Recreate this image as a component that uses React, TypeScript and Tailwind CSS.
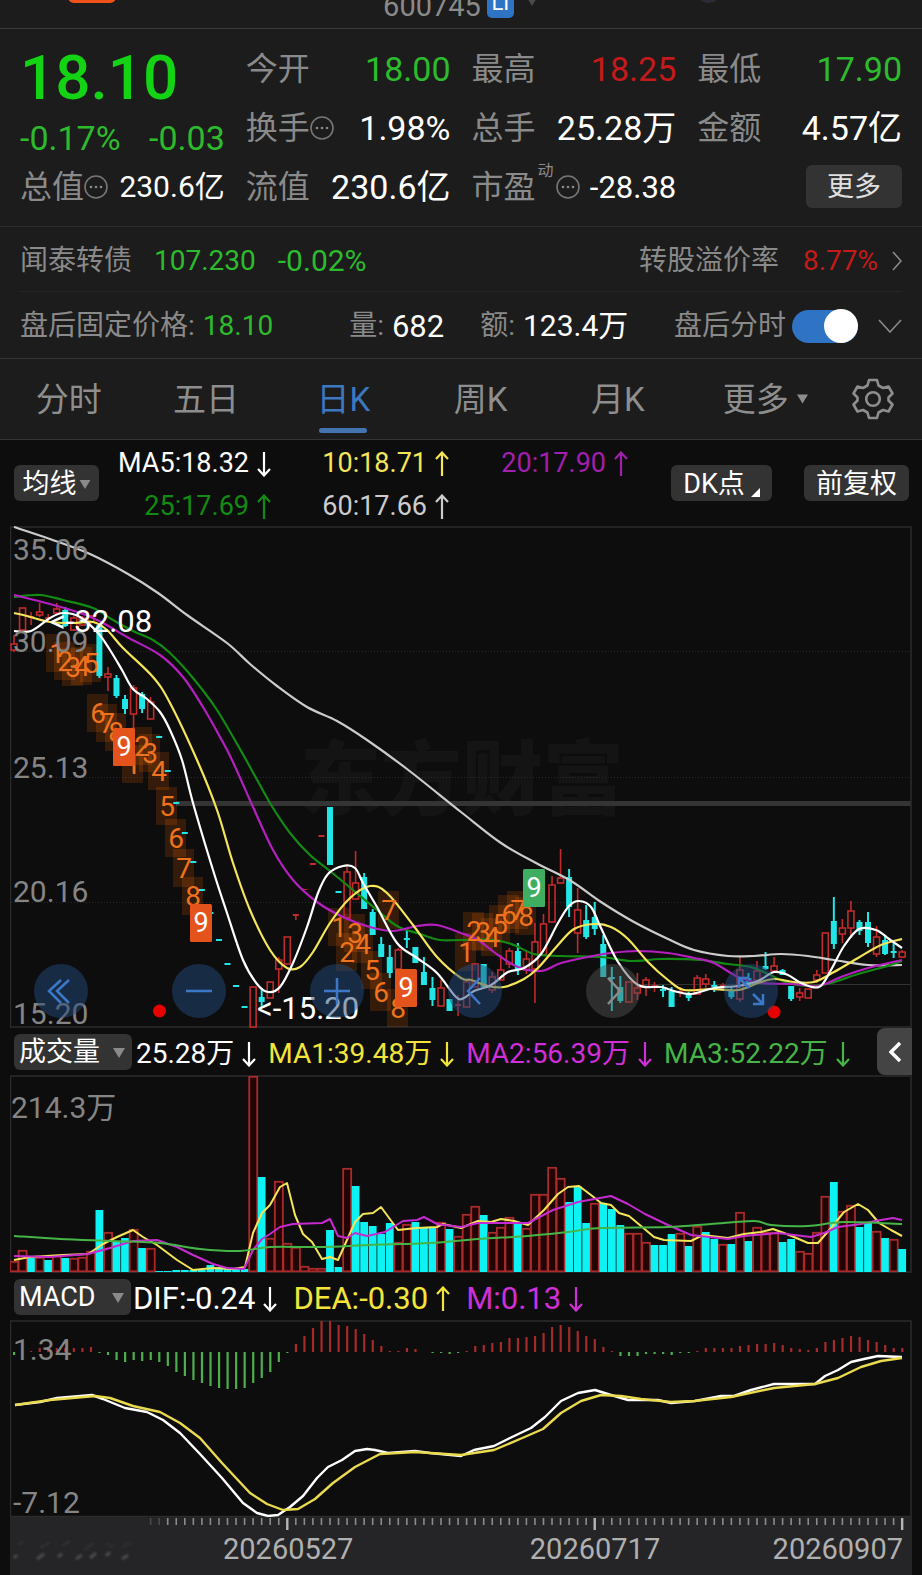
import type { ReactNode } from "react";

type Point = [number, number];
type Candle = [kind: "r" | "c", high: number, top: number, bottom: number, low: number];

const STEP = 8.54;
const xAt = (i: number) => 14 + STEP * i;

const RED = "#c22b2b";
const CYAN = "#22e6e6";
const YELLOW = "#f5e558";
const MAGENTA = "#b51fc0";

/* Catmull-Rom spline through the given points */
function curve(points: Point[]): string {
  let d = `M${points[0][0]} ${points[0][1]}`;
  for (let i = 0; i < points.length - 1; i++) {
    const p0 = points[i - 1] ?? points[i];
    const p1 = points[i];
    const p2 = points[i + 1];
    const p3 = points[i + 2] ?? p2;
    d += `C${p1[0] + (p2[0] - p0[0]) / 6} ${p1[1] + (p2[1] - p0[1]) / 6} ${p2[0] - (p3[0] - p1[0]) / 6} ${p2[1] - (p3[1] - p1[1]) / 6} ${p2[0]} ${p2[1]}`;
  }
  return d;
}

const candles: Candle[] = [
  ["r", 635, 644, 650, 652], ["r", 608, 608, 630, 630], ["r", 612, 616, 618, 625], ["r", 603, 612, 615, 617],
  ["r", 614, 617, 619, 622], ["r", 603, 609, 613, 615], ["c", 607, 610, 626, 627], ["r", 616, 618, 630, 631],
  ["r", 616, 618, 625, 626], ["r", 615, 616, 622, 624], ["c", 625, 625, 676, 678], ["r", 667, 674, 677, 691],
  ["c", 675, 678, 696, 698], ["c", 695, 699, 709, 714], ["r", 685, 688, 714, 772], ["c", 692, 694, 709, 713],
  ["r", 697, 702, 719, 719], ["c", 736, 736, 738, 738], ["c", 770, 770, 772, 772], ["c", 802, 802, 804, 804],
  ["c", 832, 832, 834, 834], ["c", 861, 861, 863, 863], ["c", 889, 889, 891, 891], ["c", 912, 912, 914, 914],
  ["c", 939, 939, 941, 941], ["c", 963, 963, 965, 965], ["c", 985, 985, 987, 987], ["c", 1006, 1006, 1008, 1008],
  ["r", 987, 987, 1027, 1027], ["c", 988, 997, 1002, 1007], ["r", 982, 982, 998, 998], ["r", 957, 960, 969, 993],
  ["r", 937, 937, 964, 964], ["r", 914, 914, 916, 920], ["r", 889, 889, 890, 890], ["r", 863, 863, 865, 865],
  ["r", 835, 835, 837, 837], ["c", 807, 807, 865, 865], ["c", 891, 891, 893, 893], ["r", 867, 872, 918, 918],
  ["r", 851, 883, 899, 899], ["c", 873, 877, 909, 909], ["c", 909, 912, 935, 935], ["c", 937, 944, 957, 957],
  ["c", 945, 957, 973, 978], ["r", 948, 950, 969, 969], ["c", 930, 938, 940, 948], ["c", 947, 947, 963, 963],
  ["c", 957, 972, 985, 985], ["c", 977, 988, 1000, 1006], ["r", 980, 988, 1006, 1006], ["c", 999, 999, 1011, 1011],
  ["r", 995, 1004, 1006, 1016], ["r", 982, 982, 1007, 1007], ["r", 964, 964, 987, 987], ["c", 964, 964, 987, 987],
  ["r", 972, 977, 990, 993], ["r", 955, 970, 980, 980], ["r", 948, 951, 964, 968], ["c", 943, 951, 970, 975],
  ["r", 950, 959, 970, 974], ["r", 923, 942, 969, 1003], ["r", 914, 924, 955, 955], ["r", 876, 885, 922, 922],
  ["r", 849, 878, 883, 884], ["c", 869, 877, 907, 917], ["r", 888, 910, 933, 953], ["c", 905, 920, 937, 939],
  ["c", 902, 917, 929, 935], ["c", 935, 944, 977, 977], ["c", 967, 977, 979, 1011], ["c", 976, 987, 1001, 1003],
  ["r", 982, 982, 1002, 1002], ["r", 973, 988, 993, 1000], ["r", 977, 980, 987, 996], ["r", 982, 985, 987, 992],
  ["c", 985, 989, 991, 997], ["c", 987, 991, 1007, 1007], ["r", 987, 991, 993, 997], ["c", 992, 994, 998, 1001],
  ["r", 975, 978, 994, 994], ["r", 974, 979, 984, 988], ["c", 981, 985, 987, 992], ["r", 983, 985, 987, 988],
  ["c", 987, 990, 997, 999], ["r", 957, 970, 999, 1002], ["c", 973, 978, 985, 988], ["r", 961, 971, 980, 983],
  ["c", 952, 966, 969, 970], ["r", 957, 966, 971, 973], ["c", 969, 970, 975, 975], ["c", 986, 986, 999, 1001],
  ["r", 988, 993, 997, 1001], ["r", 989, 989, 998, 998], ["r", 970, 975, 980, 983], ["r", 933, 933, 973, 973],
  ["c", 897, 921, 944, 949], ["r", 919, 928, 934, 943], ["r", 901, 911, 928, 936], ["c", 920, 922, 931, 935],
  ["c", 912, 922, 943, 947], ["r", 926, 937, 954, 957], ["c", 935, 940, 954, 955], ["c", 943, 951, 953, 958],
  ["r", 950, 952, 957, 958],
];

const ma60: Point[] = [[14, 527], [50, 539], [90, 554], [128, 574], [158, 593], [187, 615], [227, 643], [250, 664], [277, 686], [307, 707], [337, 721], [367, 740], [407, 769], [461, 812], [501, 843], [536, 863], [571, 881], [601, 902], [634, 922], [668, 939], [694, 950], [728, 956], [754, 956], [781, 954], [808, 956], [834, 960], [868, 965], [902, 965]];
const ma5: Point[] = [[14, 631], [31, 631], [50, 618], [63, 613], [80, 617], [98, 633], [110, 650], [122, 670], [133, 689], [147, 699], [160, 712], [170, 730], [182, 760], [193, 803], [213, 870], [227, 913], [243, 960], [257, 984], [268, 992], [280, 987], [293, 963], [307, 927], [318, 893], [328, 874], [343, 866], [355, 868], [363, 883], [377, 907], [397, 943], [417, 958], [437, 973], [456, 997], [464, 998], [474, 991], [491, 985], [508, 972], [524, 968], [541, 954], [558, 923], [569, 906], [579, 901], [591, 907], [601, 928], [618, 962], [638, 985], [661, 987], [674, 991], [691, 994], [714, 988], [738, 986], [758, 981], [774, 972], [788, 975], [801, 983], [819, 987], [831, 970], [844, 946], [859, 929], [876, 930], [889, 939], [902, 948]];
const ma10: Point[] = [[14, 613], [27, 616], [50, 622], [73, 623], [93, 622], [107, 630], [123, 648], [153, 677], [170, 703], [197, 760], [217, 810], [233, 863], [250, 910], [270, 950], [287, 968], [300, 967], [313, 952], [330, 923], [350, 898], [370, 886], [387, 893], [413, 925], [437, 957], [461, 978], [471, 980], [488, 986], [504, 987], [524, 979], [538, 968], [558, 945], [574, 929], [594, 924], [611, 927], [628, 939], [648, 962], [668, 980], [684, 990], [711, 989], [738, 990], [758, 983], [774, 979], [794, 982], [814, 982], [834, 972], [858, 958], [881, 945], [902, 939]];
const ma20: Point[] = [[14, 595], [50, 604], [83, 614], [103, 623], [127, 637], [160, 655], [183, 677], [203, 707], [220, 737], [232, 760], [253, 807], [273, 850], [293, 880], [317, 902], [343, 917], [370, 927], [393, 931], [417, 926], [437, 925], [461, 933], [478, 940], [498, 955], [518, 967], [541, 971], [561, 963], [588, 957], [611, 953], [638, 951], [668, 953], [694, 958], [714, 963], [738, 977], [761, 983], [794, 984], [818, 986], [841, 977], [868, 968], [902, 960]];
const ma25: Point[] = [[14, 597], [40, 595], [63, 600], [93, 608], [113, 620], [133, 631], [153, 640], [170, 653], [193, 678], [217, 710], [245, 758], [270, 803], [290, 833], [310, 855], [330, 871], [353, 890], [377, 910], [397, 926], [420, 934], [440, 940], [461, 940], [494, 940], [514, 945], [534, 954], [561, 956], [601, 957], [631, 961], [661, 959], [701, 960], [728, 964], [751, 967], [768, 974], [788, 983], [811, 986], [831, 983], [858, 974], [884, 967], [902, 961]];

/* Sequential-count markers: digit and centre */
const counts: [string, number, number][] = [
  ["1", 57, 653], ["2", 65, 661], ["3", 73, 667], ["4", 82, 666], ["5", 91, 663], ["6", 98, 713], ["7", 107, 723], ["8", 116, 732],
  ["1", 133, 764], ["2", 142, 746], ["3", 150, 753], ["4", 159, 771], ["5", 167, 806], ["6", 176, 838], ["7", 184, 868], ["8", 193, 896],
  ["1", 339, 927], ["2", 347, 952], ["3", 355, 933], ["4", 363, 944], ["5", 372, 970], ["6", 381, 992], ["7", 389, 910], ["8", 398, 1008],
  ["1", 466, 952], ["2", 474, 931], ["3", 483, 932], ["4", 492, 937], ["5", 500, 924], ["6", 509, 914], ["7", 518, 910], ["8", 526, 916],
];
const nines: [number, number, string][] = [[124, 747, "#e5531d"], [201, 923, "#e5531d"], [406, 988, "#e5531d"], [534, 888, "#3fae60"]];

const volumeKinds = "rrcrcrcrrrcrccrcrccccccccccc" + "rcrrrrrrrccrcccccrrcccrcrrrcrrrcrrrrrcccrcccrrrcccrcrccrcrcrrrccrrrrcrrccrcrc";
const volumeTops = [
  1261, 1250, 1258, 1257, 1260, 1255, 1258, 1258, 1257, 1251, 1210, 1232, 1242, 1238, 1229, 1248, 1248, 1271, 1271, 1270, 1270, 1270, 1270, 1265, 1267, 1268, 1269, 1269,
  1076, 1177, 1238, 1181, 1243, 1247, 1266, 1268, 1268, 1230, 1267, 1168, 1186, 1222, 1226, 1234, 1223, 1242, 1224, 1222, 1228, 1228, 1222, 1229, 1236,
  1214, 1206, 1215, 1232, 1227, 1217, 1224, 1228, 1194, 1194, 1167, 1178, 1202, 1186, 1223, 1203, 1203, 1209, 1225, 1233, 1233, 1242, 1245, 1245, 1234, 1233, 1246, 1226, 1232, 1239, 1244, 1244, 1212, 1241, 1227, 1232, 1232, 1242, 1239, 1251, 1253, 1232, 1196, 1182, 1211, 1205, 1227, 1223, 1231, 1238, 1239, 1249,
];
const volYellow: Point[] = [[14, 1260], [30, 1257], [63, 1255], [88, 1254], [103, 1244], [117, 1237], [133, 1230], [143, 1237], [157, 1245], [177, 1260], [193, 1270], [213, 1268], [233, 1269], [245, 1267], [253, 1233], [262, 1213], [270, 1205], [280, 1187], [287, 1183], [295, 1215], [303, 1234], [312, 1242], [322, 1259], [330, 1257], [338, 1260], [347, 1240], [355, 1222], [363, 1214], [373, 1213], [381, 1207], [398, 1230], [417, 1228], [437, 1227], [443, 1224], [461, 1228], [478, 1221], [491, 1222], [501, 1219], [514, 1221], [528, 1225], [544, 1210], [558, 1194], [568, 1187], [579, 1186], [591, 1195], [601, 1203], [611, 1205], [619, 1213], [629, 1216], [641, 1226], [654, 1237], [664, 1240], [691, 1241], [703, 1235], [728, 1238], [744, 1234], [761, 1232], [773, 1229], [784, 1233], [794, 1237], [808, 1243], [818, 1243], [831, 1228], [844, 1212], [858, 1204], [868, 1210], [879, 1223], [891, 1230], [902, 1236]];
const volMagenta: Point[] = [[14, 1256], [50, 1257], [88, 1254], [110, 1248], [133, 1241], [157, 1240], [177, 1247], [193, 1255], [213, 1264], [227, 1268], [244, 1269], [253, 1250], [262, 1239], [270, 1234], [280, 1227], [293, 1224], [322, 1223], [330, 1219], [338, 1236], [347, 1238], [355, 1233], [367, 1236], [385, 1232], [403, 1221], [417, 1220], [424, 1217], [437, 1224], [461, 1227], [478, 1223], [514, 1223], [528, 1223], [553, 1210], [578, 1202], [611, 1196], [628, 1204], [645, 1214], [668, 1225], [691, 1235], [728, 1239], [744, 1236], [778, 1233], [794, 1235], [811, 1237], [824, 1233], [838, 1227], [861, 1224], [875, 1221], [893, 1218], [902, 1220]];
const volGreen: Point[] = [[14, 1236], [60, 1239], [110, 1241], [160, 1243], [200, 1249], [240, 1251], [270, 1247], [320, 1247], [370, 1245], [430, 1243], [478, 1239], [528, 1236], [568, 1232], [601, 1228], [668, 1227], [711, 1224], [754, 1221], [771, 1225], [808, 1226], [844, 1222], [902, 1224]];

/* MACD histogram, positive above the zero line */
const histogram = [
  -3, 0, 1, 4, 5, 4, 4, 4, 4, 5, -1, -3, -8, -10, -8, -9, -8, -10, -14, -20, -24, -28, -31, -34, -36, -37, -37, -36, -31, -26, -20, -10, -1,
  8, 16, 24, 31, 31, 27, 26, 23, 18, 12, 6, 1, 1, 4, 3, 0, -1, -1, -2, -1, 1, 6, 7, 9, 10, 14, 14, 15, 16, 19, 25, 27, 25, 21, 16, 13, 5, 1,
  -4, -4, -4, -2, -2, -2, -3, -1, -1, 1, 4, 4, 4, 4, 6, 7, 8, 8, 9, 7, 4, 3, 2, 4, 10, 12, 14, 16, 15, 12, 10, 7, 4, 4,
];
const dif: Point[] = [[15, 1405], [40, 1402], [57, 1398], [92, 1395], [103, 1399], [125, 1408], [147, 1412], [163, 1420], [180, 1433], [200, 1454], [222, 1478], [243, 1503], [257, 1513], [268, 1516], [278, 1515], [290, 1507], [303, 1496], [317, 1478], [328, 1467], [342, 1460], [355, 1451], [367, 1449], [375, 1450], [388, 1453], [415, 1451], [430, 1453], [461, 1456], [474, 1450], [494, 1446], [510, 1438], [531, 1428], [545, 1417], [561, 1401], [578, 1393], [595, 1390], [611, 1395], [628, 1400], [658, 1400], [671, 1403], [695, 1401], [721, 1396], [734, 1396], [751, 1390], [774, 1384], [815, 1384], [825, 1376], [838, 1370], [851, 1362], [864, 1359], [878, 1356], [902, 1357]];
const dea: Point[] = [[15, 1405], [50, 1400], [95, 1396], [110, 1398], [133, 1406], [160, 1412], [180, 1423], [200, 1438], [222, 1463], [250, 1493], [267, 1504], [283, 1510], [298, 1509], [315, 1499], [333, 1483], [355, 1467], [380, 1454], [415, 1452], [461, 1455], [494, 1450], [520, 1439], [543, 1429], [561, 1413], [581, 1401], [601, 1395], [621, 1396], [641, 1399], [671, 1402], [694, 1401], [731, 1397], [774, 1388], [815, 1384], [838, 1378], [861, 1367], [881, 1361], [902, 1358]];

function Line({ points, color, width = 2, straight = false }: { points: Point[]; color: string; width?: number; straight?: boolean }) {
  const d = straight ? `M${points.map((p) => p.join(" ")).join("L")}` : curve(points);
  return <path d={d} fill="none" stroke={color} strokeWidth={width} strokeLinejoin="round" />;
}

function Arrow({ up = false }: { up?: boolean }) {
  return (
    <svg viewBox="0 0 14 26" className="h-[26px] w-[14px] shrink-0" fill="none" stroke="currentColor" strokeWidth="2.200" aria-hidden="true">
      <path d={up ? "M7 25V2M1 8l6-6.500 6 6.500" : "M7 1v23M1 18l6 6.500 6-6.500"} />
    </svg>
  );
}

function InfoDot() {
  return (
    <svg viewBox="0 0 24 24" className="size-6 shrink-0" aria-hidden="true">
      <circle cx="12" cy="12" r="11" fill="none" stroke="#767676" strokeWidth="1.600" />
      <g fill="#8a8a8a">
        <circle cx="7" cy="12" r="1.300" />
        <circle cx="12" cy="12" r="1.300" />
        <circle cx="17" cy="12" r="1.300" />
      </g>
    </svg>
  );
}

function Caret({ className }: { className: string }) {
  return (
    <svg viewBox="0 0 12 10" className={className} fill="currentColor" aria-hidden="true">
      <path d="M0 0h12L6 10z" />
    </svg>
  );
}

function Stat({ label, value, mark, info = false, color = "text-white", size = "text-[34px]" }: { label: string; value: string; mark?: string; info?: boolean; color?: string; size?: string }) {
  return (
    <div className="flex items-center pt-px whitespace-nowrap">
      <dt className="flex items-center text-[32px] text-[#8a8a8a]">
        {label}
        {mark && <sup className="mx-[2px] self-start text-base leading-none">{mark}</sup>}
        {info && <InfoDot />}
      </dt>
      <dd className={`ml-auto ${size} ${color}`}>{value}</dd>
    </div>
  );
}

function Chip({ children, className = "" }: { children: ReactNode; className?: string }) {
  return (
    <button type="button" className={`flex h-9 shrink-0 items-center rounded-md bg-[#333333] pt-[2px] text-[27px] leading-none whitespace-nowrap text-white ${className}`}>
      {children}
    </button>
  );
}

function Reading({ text, up, color }: { text: string; up?: boolean; color: string }) {
  return (
    <span className={`flex items-center justify-end gap-2 pt-1 whitespace-nowrap ${color}`}>
      {text}
      <Arrow up={up} />
    </span>
  );
}

function PriceChart() {
  return (
    <svg viewBox="10 526 902 502" className="block h-auto w-full" fontFamily="Roboto, 'Noto Sans CJK SC', sans-serif" role="img" aria-label="日K">
      <text x="300" y="808" fontSize="81" fontWeight="900" fill="#141414">东方财富</text>
      <g stroke="#2a2a2a" strokeDasharray="1 2">
        <path d="M11 651.500H911M11 777.500H911M11 902.500H911" />
      </g>
      <path d="M640 984.500H911" stroke="#333333" />
      <rect x="176" y="801" width="735" height="5" fill="#343434" />
      <rect x="10.500" y="527" width="900.500" height="500" fill="none" stroke="#2b2b2b" strokeWidth="1.500" />

      <g fill="#ff6a00" fillOpacity="0.17">
        {counts.map(([, x, y], i) => (
          <rect key={i} x={x - 11} y={y - 19} width="21" height="38" />
        ))}
      </g>

      {candles.map(([kind, high, top, bottom, low], i) => {
        const x = xAt(i);
        const flat = bottom - top <= 2;
        return kind === "c" ? (
          <g key={i} fill={CYAN}>
            <rect x={x - 1} y={high} width="2" height={low - high} />
            <rect x={x - 3} y={top} width="6" height={bottom - top} />
          </g>
        ) : (
          <g key={i} fill={flat ? RED : "none"} stroke={flat ? "none" : RED} strokeWidth="1.600">
            {flat ? (
              <>
                <rect x={x - 0.75} y={high} width="1.500" height={low - high} />
                <rect x={x - 3} y={top} width="6" height={bottom - top} />
              </>
            ) : (
              <>
                <path d={`M${x} ${high}V${top}M${x} ${bottom}V${low}`} />
                <rect x={x - 3} y={top} width="6" height={bottom - top} />
              </>
            )}
          </g>
        );
      })}

      <Line points={ma60} color="#cccccc" width={2.2} />
      <Line points={ma25} color="#138a13" width={2.2} />
      <Line points={ma20} color={MAGENTA} width={2.2} />
      <Line points={ma10} color={YELLOW} width={2.2} />
      <Line points={ma5} color="#ffffff" width={2.2} />

      <g fontSize="28" textAnchor="middle" fill="#f0721c">
        {counts.map(([digit, x, y], i) => (
          <text key={i} x={x} y={y + 10}>{digit}</text>
        ))}
      </g>
      {nines.map(([x, y, color]) => (
        <g key={x}>
          <rect x={x - 11} y={y - 19} width="22" height="38" rx="1.500" fill={color} />
          <text x={x} y={y + 9} fontSize="27" textAnchor="middle" fill="#ffffff">9</text>
        </g>
      ))}

      <g fontSize="30" fill="#858585">
        <text x="13" y="560">35.06</text>
        <text x="13" y="652">30.09</text>
        <text x="13" y="778">25.13</text>
        <text x="13" y="902">20.16</text>
        <text x="13" y="1024">15.20</text>
      </g>
      <g fontSize="31" fill="#ffffff">
        <text x="50" y="632">&lt;-32.08</text>
        <text x="257" y="1019">&lt;-15.20</text>
      </g>
      <circle cx="159.500" cy="1011" r="6.500" fill="#e60000" />
      <circle cx="774" cy="1012" r="6.500" fill="#e60000" />
    </svg>
  );
}

const tools: { name: string; path: string; muted?: boolean }[] = [
  { name: "最早", path: "M27 16 15 27l12 12M35 16 23 27l12 12" },
  { name: "缩小", path: "M14 27h26" },
  { name: "放大", path: "M14 27h26M27 14v26" },
  { name: "向左", path: "M32 14 20 27l12 13" },
  { name: "向右", path: "M22 14l12 13-12 13", muted: true },
  { name: "全屏", path: "M15 24V14h10M15 14l10 10M39 30v10H29M39 40 29 30" },
];

function ChartTools() {
  return (
    <div className="absolute bottom-[10px] left-6 flex gap-[84px]">
      {tools.map((tool) => (
        <button
          key={tool.name}
          type="button"
          aria-label={tool.name}
          className={`size-[54px] shrink-0 rounded-full ${tool.muted ? "bg-[#555555]/45 text-[#8a8a8a]" : "bg-[#234a7c]/50 text-[#3c78c8]"}`}
        >
          <svg viewBox="0 0 54 54" fill="none" stroke="currentColor" strokeWidth="2.500">
            <path d={tool.path} />
          </svg>
        </button>
      ))}
    </div>
  );
}

function VolumeChart() {
  return (
    <svg viewBox="10 1075 902 198" className="block h-auto w-full" fontFamily="Roboto, 'Noto Sans CJK SC', sans-serif" role="img" aria-label="成交量">
      <rect x="10.500" y="1076" width="900.500" height="196" fill="none" stroke="#2b2b2b" strokeWidth="1.500" />
      {volumeTops.map((top, i) => {
        const x = xAt(i);
        const height = Math.max(1272 - top, 1);
        return volumeKinds[i] === "c" ? (
          <rect key={i} x={x - 3.9} y={top} width="7.800" height={height} fill="#0df2f2" />
        ) : (
          <rect key={i} x={x - 3.9} y={top + 0.8} width="8" height={Math.max(height - 1.5, 0.5)} fill="#230404" stroke="#a82a2a" strokeWidth="1.800" />
        );
      })}
      <Line points={volYellow} color={YELLOW} straight />
      <Line points={volMagenta} color="#c62bd0" straight />
      <Line points={volGreen} color="#46b446" />
      <text x="11" y="1118" fontSize="30" fill="#858585">214.3万</text>
    </svg>
  );
}

function MacdChart() {
  return (
    <svg viewBox="10 1320 902 197" className="block h-auto w-full" fontFamily="Roboto, 'Noto Sans CJK SC', sans-serif" role="img" aria-label="MACD">
      <rect x="10.500" y="1321" width="900.500" height="195.500" fill="none" stroke="#2b2b2b" strokeWidth="1.500" />
      {histogram.map((value, i) => (
        <rect key={i} x={xAt(i) - 1} y={value > 0 ? 1352 - value : 1352} width="2.200" height={Math.abs(value)} fill={value > 0 ? "#a52a2a" : "#4caf4c"} />
      ))}
      <g fontSize="30" fill="#858585">
        <text x="13" y="1360">1.34</text>
        <text x="13" y="1513">-7.12</text>
      </g>
      <Line points={dif} color="#ffffff" width={2.4} straight />
      <Line points={dea} color="#eadb4e" width={2.4} straight />
    </svg>
  );
}

function DateAxis() {
  return (
    <svg viewBox="10 1517 902 58" className="block h-auto w-full bg-[#252527]" fontFamily="Roboto, sans-serif" role="img" aria-label="日期">
      <defs>
        <filter id="smudge" x="-20%" y="-50%" width="140%" height="200%"><feGaussianBlur stdDeviation="1.200" /></filter>
      </defs>
      {histogram.map((_, i) => {
        if (i < 16) return null;
        const major = i === 32 || i === 68 || i === 104;
        return <rect key={i} x={xAt(i) - (major ? 1.2 : 0.8)} y="1518" width={major ? 2.4 : 1.6} height={major ? 12 : 7} fill={major ? "#b5b5b5" : "#8b8b8b"} opacity={i < 18 ? 0.35 : 1} />;
      })}
      <g filter="url(#smudge)" fill="none" strokeWidth="3">
        <path d="M18 1545l6-4M40 1548l10-6M62 1546l8-5M84 1550l10-7M106 1544l8 3M122 1547l10-5" stroke="#2d2d2f" />
        <path d="M14 1558l3-3M37 1559l7-5M58 1557l4-3M76 1559l6-4M90 1558l6-5M106 1556l4-4M122 1559l6-4" stroke="#4c4c4e" />
      </g>
      <g fontSize="29" fill="#b0b0b0">
        <text x="223" y="1559">20260527</text>
        <text x="595" y="1559" textAnchor="middle">20260717</text>
        <text x="903" y="1559" textAnchor="end">20260907</text>
      </g>
    </svg>
  );
}

const periods = ["分时", "五日", "日K", "周K", "月K"];

export default function App() {
  return (
    <main className="bg-[#0d0d0d] font-['Roboto','Noto_Sans_CJK_SC',sans-serif] leading-none text-white">
      <div className="bg-[#1c1c1c]">
        <header className="relative flex h-[29px] items-end justify-center overflow-hidden border-b border-[#3a3a3a]">
          <span className="absolute -top-4 left-[68px] h-[19px] w-12 rounded-md bg-[#f0521c]" />
          <div className="flex items-end pb-[10px]">
            <span className="pb-[2px] text-[29px] leading-5 text-[#8a8a8a]">600745</span>
            <span className="ml-[6px] flex h-8 w-[27px] items-end justify-center rounded-[5px] bg-[#2f74c4] pb-[7px] text-[22px] leading-4">LI</span>
            <span className="ml-[11px] pb-3 text-[#4a4a4a]"><Caret className="h-[10px] w-[14px]" /></span>
          </div>
          <span className="absolute -top-6 left-[695px] size-[27px] rounded-full bg-[#2c2c36]" />
        </header>

        <dl className="grid auto-rows-[59px] grid-cols-4 gap-x-[21px] px-5 py-[10px]">
          <div className="row-span-2 whitespace-nowrap">
            <dt className="sr-only">最新价</dt>
            <dd>
              <p className="text-[62px] leading-[78px] font-medium text-[#14d214]">18.10</p>
              <p className="flex justify-between text-[34px] leading-[42px] text-[#2dbb2d]">
                <span>-0.17%</span>
                <span>-0.03</span>
              </p>
            </dd>
          </div>
          <Stat label="今开" value="18.00" color="text-[#2dbb2d]" />
          <Stat label="最高" value="18.25" color="text-[#c41a1a]" />
          <Stat label="最低" value="17.90" color="text-[#2dbb2d]" />
          <Stat label="换手" value="1.98%" info />
          <Stat label="总手" value="25.28万" />
          <Stat label="金额" value="4.57亿" />
          <Stat label="总值" value="230.6亿" info size="text-[30px]" />
          <Stat label="流值" value="230.6亿" />
          <Stat label="市盈" value="-28.38" mark="动" info size="text-[31px]" />
          <div className="flex items-center justify-end">
            <button type="button" className="h-[43px] w-24 rounded-md bg-[#333333] pt-[2px] text-[27px] text-[#e0e0e0]">更多</button>
          </div>
        </dl>

        <a href="#bond" className="flex h-[65px] items-center border-t border-[#2c2c2c] px-5 pt-1 text-[28px] whitespace-nowrap">
          <span className="text-[#8a8a8a]">闻泰转债</span>
          <span className="ml-[22px] text-[#2dbb2d]">107.230</span>
          <span className="ml-[22px] text-[30px] text-[#2dbb2d]">-0.02%</span>
          <span className="ml-auto text-[#8a8a8a]">转股溢价率</span>
          <span className="ml-6 text-[#c41a1a]">8.77%</span>
          <svg viewBox="0 0 10 20" className="ml-[14px] h-5 w-[10px]" fill="none" stroke="#8a8a8a" strokeWidth="1.600" aria-hidden="true">
            <path d="M1 1l8 9-8 9" />
          </svg>
        </a>

        <div className="px-5">
          <div className="flex h-[67px] items-center border-t border-[#262626] pt-[2px] text-[28px] whitespace-nowrap">
            <span className="text-[#8a8a8a]">盘后固定价格:</span>
            <span className="ml-2 text-[#2dbb2d]">18.10</span>
            <span className="ml-[76px] text-[#8a8a8a]">量:</span>
            <span className="ml-2 text-[31px]">682</span>
            <span className="ml-9 text-[#8a8a8a]">额:</span>
            <span className="ml-2 text-[30px]">123.4万</span>
            <label htmlFor="after-hours" className="ml-auto text-[#8a8a8a]">盘后分时</label>
            <input
              id="after-hours"
              type="checkbox"
              role="switch"
              defaultChecked
              className="ml-[6px] flex h-[33px] w-[66px] cursor-pointer appearance-none items-center rounded-full bg-[#555555] before:size-[34px] before:rounded-full before:bg-white checked:justify-end checked:bg-[#2f74c4]"
            />
            <button type="button" aria-label="展开" className="ml-5">
              <svg viewBox="0 0 24 14" className="h-[14px] w-6" fill="none" stroke="#8a8a8a" strokeWidth="1.600">
                <path d="M1 1l11 12L23 1" />
              </svg>
            </button>
          </div>
        </div>

        <nav className="flex h-[82px] border-y border-[#343434] text-[33px] text-[#8e8e8e]">
          {periods.map((name) => (
            <button
              key={name}
              type="button"
              className={name === "日K" ? "relative flex-1 text-[#3c78c0] after:absolute after:bottom-[6px] after:left-1/2 after:h-[5px] after:w-12 after:-translate-x-1/2 after:rounded-full after:bg-[#4474b0]" : "flex-1"}
            >
              {name}
            </button>
          ))}
          <button type="button" className="flex-1">
            <span className="flex items-center justify-center gap-2 pl-5">
              更多
              <Caret className="h-[10px] w-[11px]" />
            </span>
          </button>
          <button type="button" aria-label="设置" className="flex w-[98px] items-center justify-center">
            <svg viewBox="0 0 42 42" className="size-[42px]" fill="none" stroke="currentColor" strokeWidth="2.600" strokeLinejoin="round">
              <path d="M17 2h8l1.500 5.500 4.500 2.500 5.500-1.500 4 7-4 4v3l4 4-4 7-5.500-1.500-4.500 2.500L25 40h-8l-1.500-5.500-4.500-2.500L5.500 33.500l-4-7 4-4v-3l-4-4 4-7L11 10l4.500-2.500z" />
              <circle cx="21" cy="21" r="6.800" />
            </svg>
          </button>
        </nav>
      </div>

      <section className="flex h-[86px] items-center pr-[13px] pl-[14px]">
        <Chip className="w-[85px] justify-center gap-[2px]">
          均线
          <Caret className="h-[9px] w-3 text-[#8a8a8a]" />
        </Chip>
        <div className="grid flex-1 grid-cols-[1fr_178px_179px] gap-y-3 text-[27px]">
          <Reading text="MA5:18.32" color="text-white" />
          <Reading text="10:18.71" up color="text-[#f5e558]" />
          <Reading text="20:17.90" up color="text-[#a11fac]" />
          <Reading text="25:17.69" up color="text-[#138a13]" />
          <Reading text="60:17.66" up color="text-[#cccccc]" />
        </div>
        <Chip className="ml-[43px] w-[101px] justify-center gap-[6px]">
          DK点
          <svg viewBox="0 0 9 9" className="mt-4 size-[9px]" fill="currentColor" aria-hidden="true">
            <path d="M9 0v9H0z" />
          </svg>
        </Chip>
        <Chip className="ml-8 w-[105px] justify-center">前复权</Chip>
      </section>

      <div className="px-[10px]">
        <div className="relative">
          <PriceChart />
          <ChartTools />
        </div>

        <section className="flex h-[47px] items-center pl-1 text-[28px]">
          <Chip className="w-[118px] justify-between pr-[7px] pl-[5px]">
            成交量
            <Caret className="h-[10px] w-3 text-[#8a8a8a]" />
          </Chip>
          <div className="flex items-center gap-3 pl-1">
            <Reading text="25.28万" color="text-white" />
            <Reading text="MA1:39.48万" color="text-[#f3e43a]" />
            <Reading text="MA2:56.39万" color="text-[#cf2fd6]" />
            <Reading text="MA3:52.22万" color="text-[#46b446]" />
          </div>
          <button type="button" aria-label="收起" className="ml-auto flex h-[47px] w-[35px] items-center justify-center rounded-l-lg bg-[#444444]">
            <svg viewBox="0 0 12 20" className="h-5 w-3" fill="none" stroke="#ffffff" strokeWidth="3.500">
              <path d="M11 1 2 10l9 9" />
            </svg>
          </button>
        </section>

        <VolumeChart />

        <section className="flex h-[47px] items-center pl-1 text-[31px]">
          <Chip className="w-[117px] justify-between pr-[7px] pl-[5px]">
            MACD
            <Caret className="h-[10px] w-3 text-[#8a8a8a]" />
          </Chip>
          <div className="flex items-center gap-4 pl-[2px]">
            <Reading text="DIF:-0.24" color="text-white" />
            <Reading text="DEA:-0.30" up color="text-[#f3e43a]" />
            <Reading text="M:0.13" color="text-[#cf2fd6]" />
          </div>
        </section>

        <MacdChart />
        <DateAxis />
      </div>
    </main>
  );
}
